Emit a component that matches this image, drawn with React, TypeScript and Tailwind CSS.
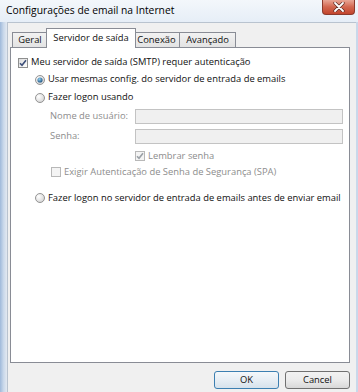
import React from "react";

const font = { fontFamily: '"Open Sans", "Liberation Sans", sans-serif' };

function CheckBox({ checked, disabled }: { checked?: boolean; disabled?: boolean }) {
  return (
    <div
      className={`w-[10px] h-[10px] shrink-0 border flex items-center justify-center ${
        disabled ? "border-[#b8b8b8] bg-[#f4f4f4]" : "border-[#8e8f8f] bg-gradient-to-br from-[#dcdcdc] to-[#ffffff]"
      }`}
    >
      {checked && (
        <svg width="8" height="8" viewBox="0 0 8 8">
          <path
            d="M1 4.2 L3 6.3 L7 1.2"
            fill="none"
            stroke={disabled ? "#9aa0a6" : "#3d4f7a"}
            strokeWidth="1.6"
          />
        </svg>
      )}
    </div>
  );
}

function Radio({ checked }: { checked?: boolean }) {
  return (
    <svg width="10" height="10" viewBox="0 0 10 10" className="shrink-0">
      <defs>
        <radialGradient id="rbg" cx="0.35" cy="0.35" r="0.7">
          <stop offset="0" stopColor="#ffffff" />
          <stop offset="1" stopColor="#d4d4d4" />
        </radialGradient>
        <radialGradient id="rdot" cx="0.4" cy="0.35" r="0.7">
          <stop offset="0" stopColor="#8fd0f2" />
          <stop offset="1" stopColor="#1b4d7a" />
        </radialGradient>
      </defs>
      <circle cx="5" cy="5" r="4.5" fill="url(#rbg)" stroke="#8a8a8a" strokeWidth="0.9" />
      {checked && <circle cx="5" cy="5" r="2.6" fill="url(#rdot)" />}
    </svg>
  );
}

export default function App() {
  return (
    <div className="w-[358px] h-[392px] overflow-hidden flex flex-col bg-[#dbe6f3] text-[9.4px] text-[#111] whitespace-nowrap" style={font}>
      {/* title bar */}
      <div className="h-[22px] shrink-0 flex items-start justify-between bg-gradient-to-b from-[#f3f7fb] to-[#e6eef7]">
        <span className="pl-[6px] pt-[3px] text-[10.3px] text-black leading-[14px]">
          Configurações de email na Internet
        </span>
        <div className="mr-[3px] w-[33px] h-[15px] rounded-b-[4px] border border-t-0 border-[#8b3a2c] bg-gradient-to-b from-[#e8a696] via-[#d2664f] to-[#c2452c] flex items-center justify-center">
          <svg width="12" height="10" viewBox="0 0 12 10">
            <path d="M2 1 L10 9 M10 1 L2 9" stroke="#5a2a22" strokeWidth="3.2" strokeLinecap="round" />
            <path d="M2 1 L10 9 M10 1 L2 9" stroke="#ffffff" strokeWidth="1.8" strokeLinecap="round" />
          </svg>
        </div>
      </div>

      <div className="flex flex-1">
        {/* left frame */}
        <div className="w-[7px] bg-gradient-to-r from-[#9fb9da] via-[#c9d8ea] to-[#e3e9f1]" />
        {/* client */}
        <div className="flex-1 bg-[#f0f0f0] border-t border-l border-[#b9c3cf] flex flex-col">
          {/* tabs */}
          <div className="mt-[5px] ml-[4px] h-[20px] flex items-end relative z-10 -mb-px">
            <div className="w-[36px] h-[16px] border border-[#898c95] bg-gradient-to-b from-[#f2f2f2] to-[#e3e3e3] flex items-center justify-center">
              Geral
            </div>
            <div className="w-[90px] -mx-[2px] h-[20px] border border-b-0 border-[#898c95] bg-white flex items-start justify-center pt-[2px] relative z-10">
              Servidor de saída
            </div>
            <div className="w-[46px] h-[16px] border border-l-0 border-[#898c95] bg-gradient-to-b from-[#f2f2f2] to-[#e3e3e3] flex items-center justify-center">
              Conexão
            </div>
            <div className="w-[56px] h-[16px] border border-l-0 border-[#898c95] bg-gradient-to-b from-[#f2f2f2] to-[#e3e3e3] flex items-center justify-center">
              Avançado
            </div>
          </div>

          {/* panel */}
          <div className="ml-[2px] mr-[6px] h-[316px] border border-[#898c95] bg-white flex flex-col">
            <div className="mt-[6px] h-[17px] flex items-center pl-[7px] gap-[3px]">
              <CheckBox checked />
              <span>Meu servidor de saída (SMTP) requer autenticação</span>
            </div>
            <div className="h-[17px] flex items-center pl-[24px] gap-[3px]">
              <Radio checked />
              <span>Usar mesmas config. do servidor de entrada de emails</span>
            </div>
            <div className="h-[19px] flex items-center pl-[24px] gap-[3px]">
              <Radio />
              <span>Fazer logon usando</span>
            </div>
            <div className="mt-[2px] h-[15px] flex items-center pl-[39px]">
              <span className="w-[85px] text-[#8d8d8d]">Nome de usuário:</span>
              <div className="w-[208px] h-[15px] border border-[#c3c3c3] bg-[#f0f0f0]" />
            </div>
            <div className="mt-[5px] h-[15px] flex items-center pl-[39px]">
              <span className="w-[85px] text-[#8d8d8d]">Senha:</span>
              <div className="w-[208px] h-[15px] border border-[#c3c3c3] bg-[#f0f0f0]" />
            </div>
            <div className="mt-[4px] h-[16px] flex items-center pl-[124px] gap-[3px] text-[#8d8d8d]">
              <CheckBox checked disabled />
              <span>Lembrar senha</span>
            </div>
            <div className="h-[16px] flex items-center pl-[40px] gap-[3px] text-[#8d8d8d]">
              <CheckBox disabled />
              <span>Exigir Autenticação de Senha de Segurança (SPA)</span>
            </div>
            <div className="mt-[10px] h-[16px] flex items-center pl-[24px] gap-[3px]">
              <Radio />
              <span>Fazer logon no servidor de entrada de emails antes de enviar email</span>
            </div>
          </div>

          {/* buttons */}
          <div className="mt-[8px] mr-[6px] flex justify-end gap-[6px]">
            <div className="w-[65px] h-[18px] rounded-[3px] border border-[#3c7fb1] bg-gradient-to-b from-[#f4f8fb] via-[#e7eef4] to-[#d6e2ec] flex items-center justify-center">
              OK
            </div>
            <div className="w-[65px] h-[18px] rounded-[3px] border border-[#707070] bg-gradient-to-b from-[#f2f2f2] via-[#ebebeb] to-[#d8d8d8] flex items-center justify-center">
              Cancel
            </div>
          </div>
        </div>
        {/* right frame */}
        <div className="w-[2px] bg-[#c9d8ea]" />
      </div>
    </div>
  );
}
